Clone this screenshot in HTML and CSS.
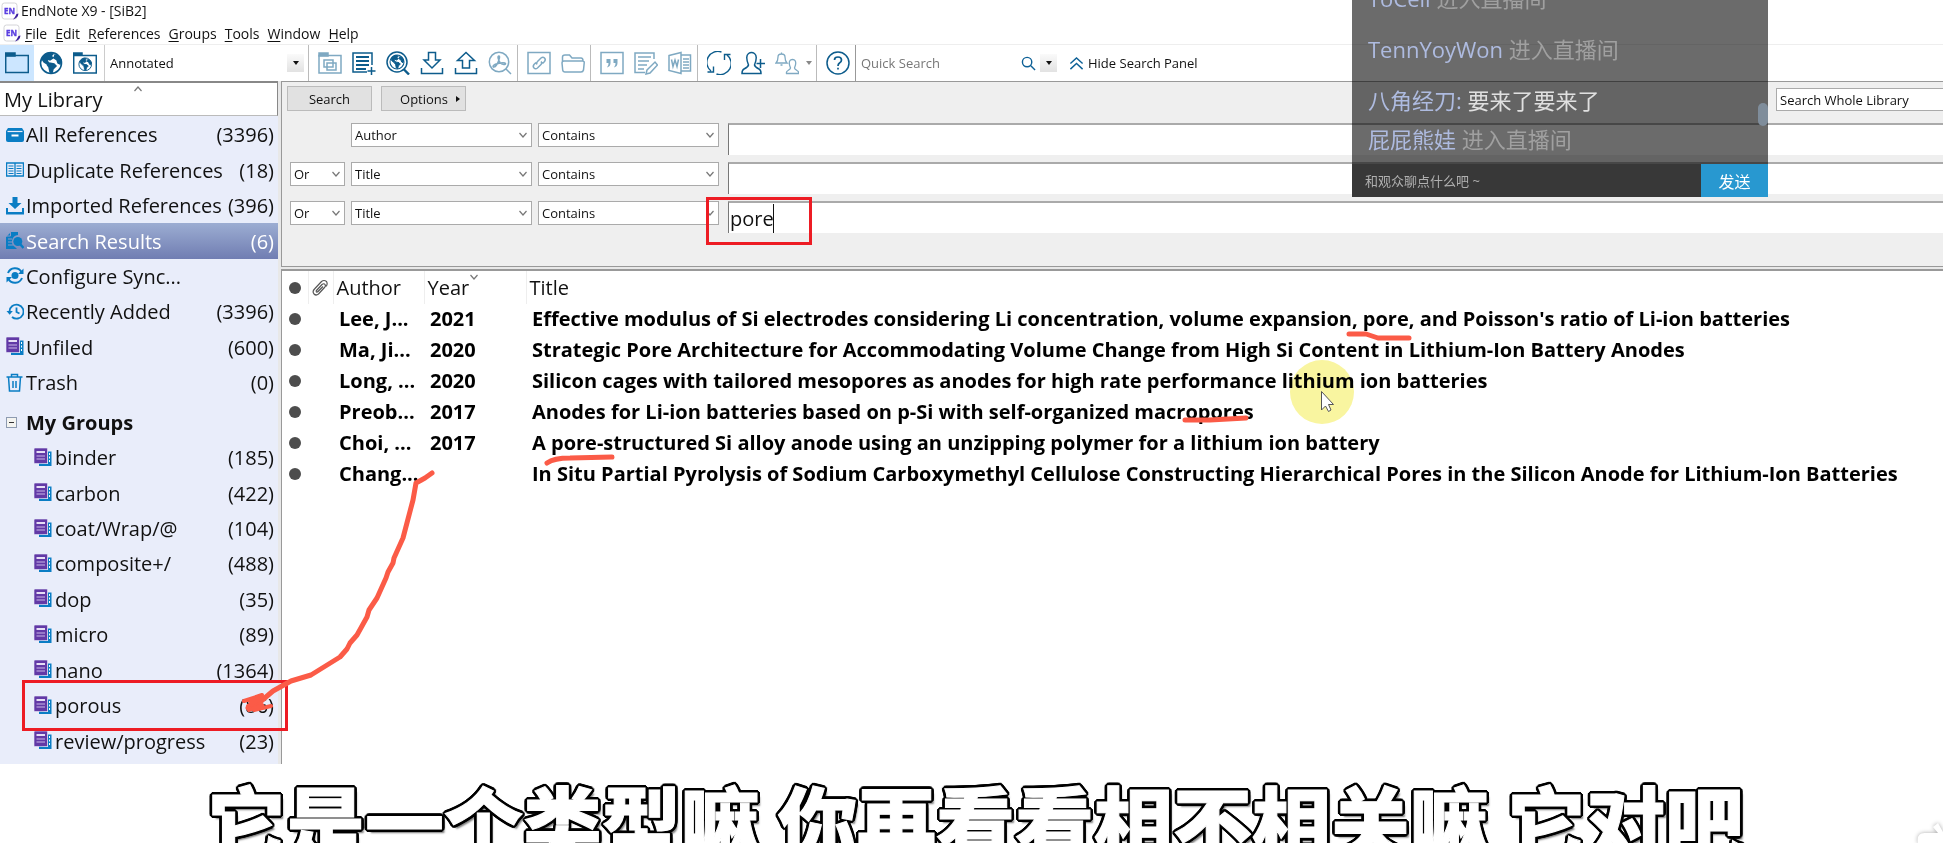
FILE: index.html
```html
<!DOCTYPE html>
<html lang="en">
<head>
<meta charset="utf-8">
<title>EndNote X9 - [SiB2]</title>
<link rel="stylesheet" href="styles.css">
</head>
<body>
<svg class="sprite" aria-hidden="true">
  <symbol id="logo" viewBox="0 0 18 18">
    <rect x="1" y="1" width="15" height="16" rx="2.5" fill="#fff" stroke="#d4d4d8"/>
    <path d="M17.5 11.5 Q17 16 12 17.5 Q14.500 14.500 15.500 12 Z" fill="#3d1f9e"/>
    <text x="3" y="12" class="logo-text">EN</text>
  </symbol>
  <symbol id="globe" viewBox="0 0 24 24">
    <circle cx="12" cy="12" r="10.500" fill="#fff" stroke="#0d5c8c" stroke-width="1.600"/>
    <path d="M3 8 Q5 3 10 2 L14 3 L12 5 L14 7 L11 9 L9 8 L8 10 L10 12 L8 13 L5 11 Z M10 12 L15 13 L17 15 L14 18 L13 22 L11 21 L10 16 L8.500 14 Z M16 4 L19 5 L22 9 L21 13 L19 12 L18 9 L15 7 Z" fill="#0d5c8c"/>
  </symbol>
  <symbol id="group" viewBox="0 0 18 20">
    <path d="M14 16 V3.500 H17.500 V18 H5 V15 Z" fill="#0a7dc4"/>
    <path d="M15.500 5 V15" stroke="#fff" stroke-dasharray="2 1.500"/>
    <rect x="0" y="0" width="13.500" height="15.500" rx="1" fill="#6239a6" stroke="#e9edfa" stroke-width=".6"/>
    <path d="M2.500 4 H11" stroke="#e6def5" stroke-width="2"/>
    <path d="M2.500 8 H11 M2.500 11 H11" stroke="#c9b8e8" stroke-width="1.200"/>
  </symbol>
  <symbol id="chev" viewBox="0 0 10 10"><path d="M1.500 3 L5 7 L8.500 3" fill="none" stroke="#777" stroke-width="1.200"/></symbol>
</svg>

<div class="app">
  <header>
    <div class="titlebar"><svg class="logo"><use href="#logo"/></svg><span>EndNote X9 - [SiB2]</span></div>
    <nav class="menubar" aria-label="Menu">
      <svg class="logo"><use href="#logo"/></svg>
      <a href="#"><u>F</u>ile</a><a href="#"><u>E</u>dit</a><a href="#"><u>R</u>eferences</a><a href="#"><u>G</u>roups</a><a href="#"><u>T</u>ools</a><a href="#"><u>W</u>indow</a><a href="#"><u>H</u>elp</a>
    </nav>
    <div class="toolbar">
      <button class="tool tool-active" aria-label="Local library"><svg viewBox="0 0 24 24"><path d="M0 2 H10 V5 H0Z" fill="#0d5c8c"/><rect x=".7" y="4.500" width="22.600" height="17" fill="none" stroke="#0d5c8c" stroke-width="1.500"/></svg></button>
      <button class="tool" aria-label="Online search"><svg><use href="#globe"/></svg></button>
      <button class="tool" aria-label="Integrated library"><svg viewBox="0 0 24 24"><path d="M0 2 H9 V5 H0Z" fill="#0d5c8c"/><rect x=".7" y="4.500" width="22.600" height="17.500" fill="#fff" stroke="#0d5c8c" stroke-width="1.500"/><use href="#globe" x="5" y="6" width="14.500" height="14.500"/></svg></button>
      <div class="style-pick"><select aria-label="Output style"><option>Annotated</option></select><span class="drop"></span></div>
      <div class="tools">
        <button class="tool dim" aria-label="Copy to library"><svg viewBox="0 0 24 24"><path d="M1 2 H10 V5 H1Z" fill="currentColor"/><path d="M1 4.500 H23 V22 H1Z M6 9 H15 V16 H6Z M9 12 H18 V19 H9Z"/></svg></button>
        <button class="tool" aria-label="New reference"><svg viewBox="0 0 24 24"><path d="M15 21 H1 V2 H20 V14"/><path d="M4 6 H17 M4 10 H17 M4 14 H17 M4 18 H14" stroke-width="1.800"/><path d="M19.500 16 V24 M15.500 20 H23.500"/></svg></button>
        <button class="tool" aria-label="Online search"><svg viewBox="0 0 24 24"><circle cx="11" cy="11" r="10"/><use href="#globe" x="3" y="3" width="16" height="16"/><path d="M17.500 18 L23 23.500" stroke-width="2.400"/></svg></button>
        <button class="tool" aria-label="Import"><svg viewBox="0 0 24 24"><path d="M8.500 1.500 H15.500 V9 H20 L12 17 L4 9 H8.500Z M1.500 17 V22.500 H22.500 V17"/></svg></button>
        <button class="tool" aria-label="Export"><svg viewBox="0 0 24 24"><path d="M8.500 17 H15.500 V9.500 H20.500 L12 1.500 L3.500 9.500 H8.500Z M1.500 17 V22.500 H22.500 V17"/></svg></button>
        <button class="tool dim" aria-label="Find full text"><svg viewBox="0 0 24 24"><circle cx="11" cy="11" r="9.700"/><path d="M11 5 C9 5 10.500 9 12 11.500 C14 14 18 14 17.500 12.500 C17 11 8 12 5.500 14.500 C4 17 7 16.500 8.500 14 C10.500 11 12.500 5 11 5 M18 18 L23 23"/></svg></button>
      </div>
      <div class="tools">
        <button class="tool dim" aria-label="Open link"><svg viewBox="0 0 24 24"><rect x="1" y="1.500" width="22" height="21"/><path d="M10 13.500 Q9 12 10.500 10.500 L14 7 Q16 5.500 17.500 7 Q19 8.500 17.500 10.500 L15.500 12.500 M14 10.500 Q15.500 12 14 13.500 L10.500 17 Q8.500 18.500 7 17 Q5.500 15.500 7 13.500 L9 11.500"/></svg></button>
        <button class="tool dim" aria-label="Open file"><svg viewBox="0 0 24 24"><path d="M1.500 10 V6 Q1.500 4 4 4 H8.500 L11 7 H20 Q22 7 22 10 M3 10 H21.500 Q23.500 10 23.200 12 L22.500 19 Q22 21 20 21 H4 Q2 21 1.700 19 L1 12 Q1 10 3 10Z"/></svg></button>
      </div>
      <div class="tools">
        <button class="tool dim" aria-label="Insert citation"><svg viewBox="0 0 24 24"><rect x="1" y="1.500" width="22" height="21"/><path d="M6.500 8 H10.500 V12 Q10.500 15.500 7 16.500 Q8.800 14.500 8.500 12 H6.500Z M13.500 8 H17.500 V12 Q17.500 15.500 14 16.500 Q15.800 14.500 15.500 12 H13.500Z" fill="currentColor" stroke="none"/></svg></button>
        <button class="tool dim" aria-label="Format bibliography"><svg viewBox="0 0 24 24"><path d="M11 21.500 H1 V2 H20 V8"/><path d="M4 6 H17 M4 10 H15 M4 14 H13 M4 18 H10" /><path d="M13 19 L21 11 L23.500 14 L16 22 L12 23Z"/></svg></button>
        <button class="tool dim" aria-label="Open Word"><svg viewBox="0 0 24 24"><path d="M1 4.500 L13 1.500 V22.500 L1 19.500Z M13 4 H22.500 V20 H13 M15 8 H21 M15 11 H21 M15 14 H21 M15 17 H21 M3.500 8.500 L5 15.500 L7 9 L9 15.500 L10.500 8.500"/></svg></button>
      </div>
      <div class="tools">
        <button class="tool" aria-label="Sync"><svg viewBox="0 0 24 24"><path d="M4 20 A11 11 0 0 1 14.500 1 M20 4 A11 11 0 0 1 9.500 23 M17.500 9 V3.500 H23.500 M6.500 15.500 V21 H.5" stroke-width="1.400"/></svg></button>
        <button class="tool" aria-label="Share"><svg viewBox="0 0 24 24"><path d="M7.500 14 Q4 5 7.500 2.500 Q10.500 .5 13.500 2.500 Q17 5 13.500 14 Q14 16 18 18 Q20 19 20 22.500 H1 Q1 19 3 18 Q7 16 7.500 14Z M19.500 8 V17 M15.500 12.500 H24"/></svg></button>
        <button class="tool dim" aria-label="Notifications"><svg viewBox="0 0 24 24"><path d="M1 12 Q3 10 3 6 Q3 3 6.500 3 Q10 3 10 6 Q10 10 12 12Z M5.500 14 H7.500 M6.500 1.500 V3 M15.500 17 Q13 11 15.500 9 Q17.500 8 19.500 9 Q22 11 19.500 17 Q19.500 18 22 19.500 Q24 20.500 23.500 22.500 H11.500 Q11 20.500 13 19.500 Q15.500 18 15.500 17Z" stroke-width="1.300"/></svg></button>
        <span class="tri tri-dim"></span>
      </div>
      <div class="tools">
        <button class="tool" aria-label="Help"><svg viewBox="0 0 24 24"><circle cx="12" cy="12" r="11"/><path d="M8.500 9 Q8.500 6 12 6 Q15.500 6 15.500 9 Q15.500 11 13.500 12 Q12 13 12 15 M12 16.800 V18.600" stroke-width="1.700"/></svg></button>
      </div>
      <div class="quick">
        <input type="search" aria-label="Quick Search" placeholder="Quick Search">
        <svg class="mag" viewBox="0 0 16 16"><circle cx="6.500" cy="6.500" r="5"/><path d="M10.500 10.500 L15 15"/></svg>
        <span class="drop"></span>
        <button class="hide-panel"><svg viewBox="0 0 16 16"><path d="M1.500 8 L8 2 L14.500 8 M1.500 14 L8 8 L14.500 14"/></svg>Hide Search Panel</button>
      </div>
    </div>
  </header>

  <div class="body">
    <aside class="sidebar">
      <h1>My Library<svg class="sort up"><use href="#chev"/></svg></h1>
      <ul class="tree">
        <li><a href="#"><svg viewBox="0 0 18 20"><path d="M2 3 H16 L18 6 V15 Q18 17 16 17 H2 Q0 17 0 15 V6Z" fill="#0a7dc4"/><path d="M1.500 6.500 H16.500" stroke="#e9edfa" stroke-width="1.200"/><path d="M5.500 10.500 H12.500" stroke="#fff" stroke-width="2"/></svg>All References<b>(3396)</b></a></li>
        <li><a href="#"><svg viewBox="0 0 18 20"><path d="M.6 3 H17.400 V16 H.6Z M9 3 V16" fill="none" stroke="#0a7dc4" stroke-width="1.300"/><path d="M2.500 6 H7.500 M2.500 8.500 H7.500 M2.500 11 H7.500 M2.500 13.500 H7.500 M10.500 6 H15.500 M10.500 8.500 H15.500 M10.500 11 H15.500 M10.500 13.500 H15.500" stroke="#0a7dc4" stroke-width="1.200"/></svg>Duplicate References<b>(18)</b></a></li>
        <li><a href="#"><svg viewBox="0 0 18 20"><path d="M6.500 1 H11.500 V7 H15.500 L9 13 L2.500 7 H6.500Z M0 12 H2 V16 H16 V12 H18 V18.500 H0Z" fill="#0a7dc4"/></svg>Imported References<b>(396)</b></a></li>
        <li><a href="#" class="selected" aria-current="page"><svg viewBox="0 0 18 20"><path d="M5 1 H12 V4 A6.500 6.500 0 0 0 9 16 L11 18 H0 V6Z" fill="#0a7dc4"/><path d="M0 5 L4.500 5 V0.500 M2 8 H6 M2 11 H6 M2 14 H7" stroke="#8c9ac6" fill="none"/><circle cx="11.800" cy="10.500" r="4.500" fill="#0a7dc4"/><path d="M14.500 13.500 L17.500 17" stroke="#0a7dc4" stroke-width="2.500"/></svg>Search Results<b>(6)</b></a></li>
        <li><a href="#"><svg viewBox="0 0 18 20"><circle cx="9" cy="9.500" r="3.500" fill="#0a7dc4"/><path d="M2 7 A7.500 7.500 0 0 1 15.500 6 M16 12 A7.500 7.500 0 0 1 2.500 13" fill="none" stroke="#0a7dc4" stroke-width="2"/><path d="M17.500 2.500 V8 H12Z M.5 16.500 V11 H6Z" fill="#0a7dc4"/></svg>Configure Sync...</a></li>
        <li><a href="#"><svg viewBox="0 0 18 20"><path d="M3.500 9.500 A7 7 0 1 1 6 15 M10.500 5.500 V10 L13.500 11.500" fill="none" stroke="#0a7dc4" stroke-width="1.800"/><path d="M.5 9 H6.800 L3.700 12.800Z" fill="#0a7dc4"/></svg>Recently Added<b>(3396)</b></a></li>
        <li><a href="#"><svg><use href="#group"/></svg>Unfiled<b>(600)</b></a></li>
        <li><a href="#"><svg viewBox="0 0 18 20"><path d="M.5 4 H16.500 M5.500 4 V1.500 H11.500 V4 M2.500 4 L3.500 18 H13.500 L14.500 4 M7 8 V15 M10 8 V15" fill="none" stroke="#0a7dc4" stroke-width="1.500"/></svg>Trash<b>(0)</b></a></li>
        <li class="heading"><button class="expander" aria-label="Collapse My Groups"></button>My Groups</li>
        <li class="sub"><a href="#"><svg><use href="#group"/></svg>binder<b>(185)</b></a></li>
        <li class="sub"><a href="#"><svg><use href="#group"/></svg>carbon<b>(422)</b></a></li>
        <li class="sub"><a href="#"><svg><use href="#group"/></svg>coat/Wrap/@<b>(104)</b></a></li>
        <li class="sub"><a href="#"><svg><use href="#group"/></svg>composite+/<b>(488)</b></a></li>
        <li class="sub"><a href="#"><svg><use href="#group"/></svg>dop<b>(35)</b></a></li>
        <li class="sub"><a href="#"><svg><use href="#group"/></svg>micro<b>(89)</b></a></li>
        <li class="sub"><a href="#"><svg><use href="#group"/></svg>nano<b>(1364)</b></a></li>
        <li class="sub"><a href="#"><svg><use href="#group"/></svg>porous<b>(86)</b></a></li>
        <li class="sub"><a href="#"><svg><use href="#group"/></svg>review/progress<b>(23)</b></a></li>
      </ul>
    </aside>

    <main>
      <form class="search">
        <div class="search-top">
          <button type="button" class="btn">Search</button>
          <button type="button" class="btn btn-options">Options<span class="tri-right"></span></button>
          <div class="scope"><select aria-label="Search scope"><option>Search Whole Library</option></select></div>
        </div>
        <div class="row">
          <span></span>
          <span class="pick"><select aria-label="Field 1"><option>Author</option></select><svg><use href="#chev"/></svg></span>
          <span class="pick"><select aria-label="Comparison 1"><option>Contains</option></select><svg><use href="#chev"/></svg></span>
          <span class="term"><input type="text" aria-label="Term 1"></span>
        </div>
        <div class="row">
          <span class="pick"><select aria-label="Operator 2"><option>Or</option></select><svg><use href="#chev"/></svg></span>
          <span class="pick"><select aria-label="Field 2"><option>Title</option></select><svg><use href="#chev"/></svg></span>
          <span class="pick"><select aria-label="Comparison 2"><option>Contains</option></select><svg><use href="#chev"/></svg></span>
          <span class="term"><input type="text" aria-label="Term 2"></span>
        </div>
        <div class="row">
          <span class="pick"><select aria-label="Operator 3"><option>Or</option></select><svg><use href="#chev"/></svg></span>
          <span class="pick"><select aria-label="Field 3"><option>Title</option></select><svg><use href="#chev"/></svg></span>
          <span class="pick"><select aria-label="Comparison 3"><option>Contains</option></select><svg><use href="#chev"/></svg></span>
          <span class="term"><input type="text" aria-label="Term 3" value="pore"><i class="caret"></i></span>
        </div>
      </form>
      <div class="results">
        <table>
          <thead><tr>
            <th class="c-dot"><span class="dot"></span></th>
            <th class="c-clip"><svg viewBox="0 0 16 18"><path d="M4 12 L10 5.500 Q12 4 13 5.500 Q14 7 12.500 8.500 L6.500 15 Q4 17 2 15 Q0 12.500 2.500 10 L9.500 2.500 Q12 .5 14.500 2.500 Q16 5 14 7.500 M4 12 Q4.500 14 6 12.500 L11 7.500" fill="none" stroke="#555" stroke-width="1.200"/></svg></th>
            <th class="c-author">Author</th>
            <th class="c-year">Year<svg class="sort"><use href="#chev"/></svg></th>
            <th class="c-title">Title</th>
          </tr></thead>
          <tbody>
            <tr><td><span class="dot"></span></td><td></td><td>Lee, J...</td><td>2021</td><td>Effective modulus of Si electrodes considering Li concentration, volume expansion, pore, and Poisson's ratio of Li-ion batteries</td></tr>
            <tr><td><span class="dot"></span></td><td></td><td>Ma, Ji...</td><td>2020</td><td>Strategic Pore Architecture for Accommodating Volume Change from High Si Content in Lithium-Ion Battery Anodes</td></tr>
            <tr><td><span class="dot"></span></td><td></td><td>Long, ...</td><td>2020</td><td>Silicon cages with tailored mesopores as anodes for high rate performance lithium ion batteries</td></tr>
            <tr><td><span class="dot"></span></td><td></td><td>Preob...</td><td>2017</td><td>Anodes for Li-ion batteries based on p-Si with self-organized macropores</td></tr>
            <tr><td><span class="dot"></span></td><td></td><td>Choi, ...</td><td>2017</td><td>A pore-structured Si alloy anode using an unzipping polymer for a lithium ion battery</td></tr>
            <tr><td><span class="dot"></span></td><td></td><td>Chang...</td><td></td><td>In Situ Partial Pyrolysis of Sodium Carboxymethyl Cellulose Constructing Hierarchical Pores in the Silicon Anode for Lithium-Ion Batteries</td></tr>
          </tbody>
        </table>
      </div>
    </main>
  </div>
</div>

<p class="subtitle" lang="zh-CN">它是一个类型嘛 你再看看相不相关嘛 它对吧</p>

<section class="chat" lang="zh-CN">
  <ul>
    <li><a href="#">ToCell</a> 进入直播间</li>
    <li><a href="#">TennYoyWon</a> 进入直播间</li>
    <li class="said"><a href="#">八角经刀:</a> 要来了要来了</li>
    <li><a href="#">屁屁熊娃</a> 进入直播间</li>
  </ul>
  <span class="thumb"></span>
  <form><input type="text" aria-label="Message" placeholder="和观众聊点什么吧 ~"><button type="button">发送</button></form>
</section>

<div class="spotlight"></div>
<svg class="ink" aria-hidden="true">
  <g class="frame"><rect x="707.500" y="198.500" width="103" height="45"/><rect x="23.500" y="681.500" width="263" height="48"/></g>
  <g class="pen">
    <path d="M1349 334 L1366 334 L1378 338 H1409"/>
    <path d="M1185 420 L1210 420 L1246 418"/>
    <path d="M547 463 Q554 458 570 458 L612 457"/>
    <path d="M432 473 L425 478 L416 483 L413 500 L403 538 L394 558 L393 563 L388 572 L386 578 L377 598 L369 610 L367 617 L357 635 L350 643 L347 649 L340 657 L311 675 L291 681 L273 691 L260 702 L248 708"/>
    <path class="fine" d="M244 701 L262 695 L250 701 L262 698 L248 706 L249 710 L262 705 L254 710 L271 706"/>
  </g>
  <path d="M1321.500 391.500 V410 L1325.500 406 L1328.500 411.500 L1331 410 L1328.500 404.500 H1333.500Z" fill="#fff" stroke="#555"/>
  <g class="corner"><path d="M1933 827 L1938 823 L1943 832 V843 H1918 Q1916 832 1926 833 H1938Z"/></g>
</svg>
</body>
</html>
```
FILE: styles.css
```css
* { box-sizing: border-box; }

body {
  margin: 0;
  height: 100vh;
  display: flex;
  flex-direction: column;
  position: relative;
  overflow: hidden;
  background: #fff;
  color: #111;
  font-family: "Open Sans", "Noto Sans CJK SC", sans-serif;
  font-size: 13px;
}
button, input, select { font: inherit; color: inherit; margin: 0; }
button { padding: 0; border: 0; background: none; }
select { appearance: none; }
a { color: inherit; text-decoration: none; }
ul { margin: 0; padding: 0; list-style: none; }
.sprite { position: absolute; width: 0; height: 0; }

.app { flex: 1; min-height: 0; display: flex; flex-direction: column; }
.logo { width: 18px; height: 18px; flex: none; overflow: visible; }
.logo-text { font: bold 8px "Open Sans", sans-serif; fill: #5b3fe0; stroke: #5b3fe0; stroke-width: .4; }
.titlebar { display: flex; align-items: center; gap: 2px; height: 21px; padding-left: 1px; font-size: 14px; }
.menubar { display: flex; align-items: center; gap: 8px; height: 24px; padding: 1px 0 0 3px; font-size: 14px; border-bottom: 1px solid #eee; }
.menubar .logo { margin-right: -4px; }
.menubar u { text-underline-offset: 2px; }

.toolbar { display: flex; align-items: stretch; height: 36px; }
.tool { width: 34px; display: grid; place-items: center; color: #0d5c8c; flex: none; }
.tool svg { width: 24px; height: 24px; fill: none; stroke: currentColor; stroke-width: 1.500; }
.tool-active { background: #cce6ff; }
.dim { color: #7fa9c2; }
.style-pick { display: flex; align-items: center; width: 204px; padding-right: 4px; margin-left: 2px; border-left: 1px solid #ccc; }
.style-pick select { flex: 1; border: 0; background: none; padding: 0 5px; }
.drop { width: 17px; height: 18px; background: linear-gradient(#fafafa, #e2e2e2); display: grid; place-items: center; flex: none; }
.drop::after, .tri { content: ""; border: 3px solid transparent; border-top: 4px solid #111; border-bottom: 0; }
.tri-dim { border-top-color: #888; margin: 0 3px 0 2px; }
.tools { display: flex; align-items: center; gap: 1px; padding: 0 1px 0 4px; border-left: 1px solid #bbb; }
.tools .tool { width: 33px; }
.quick { display: flex; align-items: center; border-left: 1px solid #999; flex: 1; }
.quick input { width: 165px; border: 0; padding: 0 5px; outline: 0; background: none; }
.quick input::placeholder { color: #777; opacity: 1; }
.mag, .hide-panel svg { width: 15px; height: 15px; fill: none; stroke: #0d6096; stroke-width: 1.500; flex: none; }
.mag { margin-right: 4px; }
.hide-panel { display: flex; align-items: center; gap: 4px; margin-left: 12px; }

.body { flex: 1; min-height: 0; display: flex; gap: 3px; background: #e8e8e8; }
.sidebar { width: 278px; flex: none; display: flex; flex-direction: column; background: #e9edfa; }
.sidebar h1 { position: relative; margin: 0; height: 35px; padding-left: 4px; background: #fff; border: 1px solid #888; border-top-width: 2px; border-bottom-color: #bbb; border-left: 0; font-size: 20px; font-weight: 400; line-height: 34px; }
.sort { position: absolute; width: 10px; height: 10px; }
.up { left: 133px; top: 1px; transform: rotate(180deg); }
.tree { flex: 1; display: flex; flex-direction: column; padding: 1px 0 5px; font-size: 20px; }
.tree li { flex: 1; display: flex; }
.tree a { flex: 1; display: flex; align-items: center; padding: 0 4px 0 6px; gap: 2px; white-space: nowrap; }
.tree svg { width: 18px; height: 20px; flex: none; }
.tree b { margin-left: auto; font-weight: 400; }
.tree .sub a { padding-left: 34px; gap: 3px; }
.tree .selected { background: linear-gradient(#9cadd2, #707db2); color: #fff; }
.tree .heading { align-items: center; font-weight: 700; margin-top: 4px; padding-left: 6px; }
.expander { width: 11px; height: 11px; margin-right: 9px; border: 1px solid #8e9bb0; background: linear-gradient(#333, #333) center / 5px 1px no-repeat, #f4f4f0; }

main { flex: 1; min-width: 0; display: flex; flex-direction: column; gap: 2px; }
.search { background: #efefef; border: 1px solid #999; border-right: 0; height: 186px; padding: 4px 0 0 5px; display: flex; flex-direction: column; }
.search-top { display: flex; gap: 9px; height: 25px; margin-bottom: 12px; }
.btn { width: 85px; background: #e1e1e1; border: 1px solid #bbb; }
.btn-options { display: flex; align-items: center; justify-content: flex-end; gap: 8px; padding-right: 5px; }
.tri-right { border: 3px solid transparent; border-left: 4px solid #111; border-right: 0; }
.scope { margin-left: auto; width: 167px; height: 23px; margin-top: 2px; }
.scope select { width: 100%; height: 100%; border: 1px solid #aaa; border-right: 0; background: #fff; border-radius: 0; padding: 0 3px; }
.row { display: grid; grid-template-columns: 55px 181px 181px 1fr; column-gap: 6px; height: 39px; padding-left: 3px; align-items: start; }
.pick { position: relative; height: 24px; }
.pick select { width: 100%; height: 100%; padding: 0 3px; border: 1px solid #aaa; border-radius: 0; background: #fff; }
.pick svg { position: absolute; right: 4px; top: 7px; width: 10px; height: 10px; pointer-events: none; }
.term { position: relative; height: 32px; margin-left: 3px; }
.term input { display: block; width: 100%; height: 100%; border: 2px solid #aaa; border-width: 2px 0 0 1px; border-left-color: #777; background: #fff; padding: 0 1px; font-size: 20px; outline: 0; }
.caret { position: absolute; left: 45px; top: 3px; bottom: 0; width: 1px; background: #111; }

.results { flex: 1; background: #fff; border: 2px solid #999; border-width: 2px 0 0 1px; overflow: hidden; }
table { width: 100%; border-collapse: collapse; table-layout: fixed; font-size: 20px; line-height: 24px; }
th { height: 33px; padding: 0 0 0 3px; text-align: left; font-weight: 400; border-right: 1px solid #eee; position: relative; }
th:last-child { border-right: 0; }
td { height: 31px; padding: 0 0 1px 6px; font-weight: 700; color: #000; white-space: nowrap; }
.c-dot { width: 26px; }
.c-clip { width: 25px; }
.c-author { width: 91px; }
.c-year { width: 102px; }
.c-clip svg { display: block; width: 16px; height: 18px; }
.c-year .sort { left: 44px; top: 1px; }
th:first-child, td:first-child { padding-left: 7px; }
.dot { display: block; width: 12px; height: 12px; border-radius: 50%; background: #4d4d4d; }

.subtitle {
  flex: none;
  height: 79px;
  margin: 0;
  padding-left: 8px;
  overflow: hidden;
  text-align: center;
  white-space: nowrap;
  font-family: "Noto Sans CJK SC", sans-serif;
  font-weight: 900;
  font-size: 79px;
  line-height: 112px;
  color: #fff;
  -webkit-text-stroke: 1px #fff;
  text-shadow: 3px 0 #000, -3px 0 #000, 0 3px #000, 0 -3px #000, 2px 2px #000, -2px -2px #000, 2px -2px #000, -2px 2px #000, 3px 1px #000, -3px 1px #000, 3px -1px #000, -3px -1px #000, 1px 3px #000, -1px 3px #000, 1px -3px #000, -1px -3px #000, 3px 4px 2px #777;
}

.chat { position: absolute; top: 0; right: 175px; width: 416px; height: 197px; display: flex; flex-direction: column; justify-content: flex-end; overflow: hidden; background: rgba(0, 0, 0, .58); color: #a0a0a0; }
.chat ul { padding: 0 16px 9px; font-size: 22px; line-height: 32px; }
.chat li { margin-bottom: 19px; white-space: nowrap; }
.chat li:nth-child(3) { margin-bottom: 7px; }
.chat li:last-child { margin-bottom: 0; }
.chat a { color: #aebbe0; }
.chat .said { color: #e0e0e0; }
.chat form { display: flex; height: 33px; flex: none; }
.chat input { flex: 1; border: 0; padding: 0 13px; background: #383838; outline: 0; }
.chat input::placeholder { color: #b0b0b0; opacity: 1; }
.chat button { width: 67px; background: #2898d0; color: #fff; font-size: 16px; }
.thumb { position: absolute; right: 0; top: 103px; width: 10px; height: 23px; border-radius: 5px; background: #7f8d9b; }

.spotlight { position: absolute; left: 1290px; top: 360px; width: 64px; height: 64px; border-radius: 50%; background: #f9f5a0; mix-blend-mode: multiply; }
.ink { position: absolute; inset: 0; width: 100%; height: 100%; pointer-events: none; }
.frame { fill: none; stroke: #ed1c24; stroke-width: 3; }
.pen { fill: none; stroke: #fb5b47; stroke-width: 5; stroke-linecap: round; stroke-linejoin: round; }
.pen .fine { stroke-width: 4; }
.corner { fill: #fff; filter: drop-shadow(0 0 2px #aaa); }
```
